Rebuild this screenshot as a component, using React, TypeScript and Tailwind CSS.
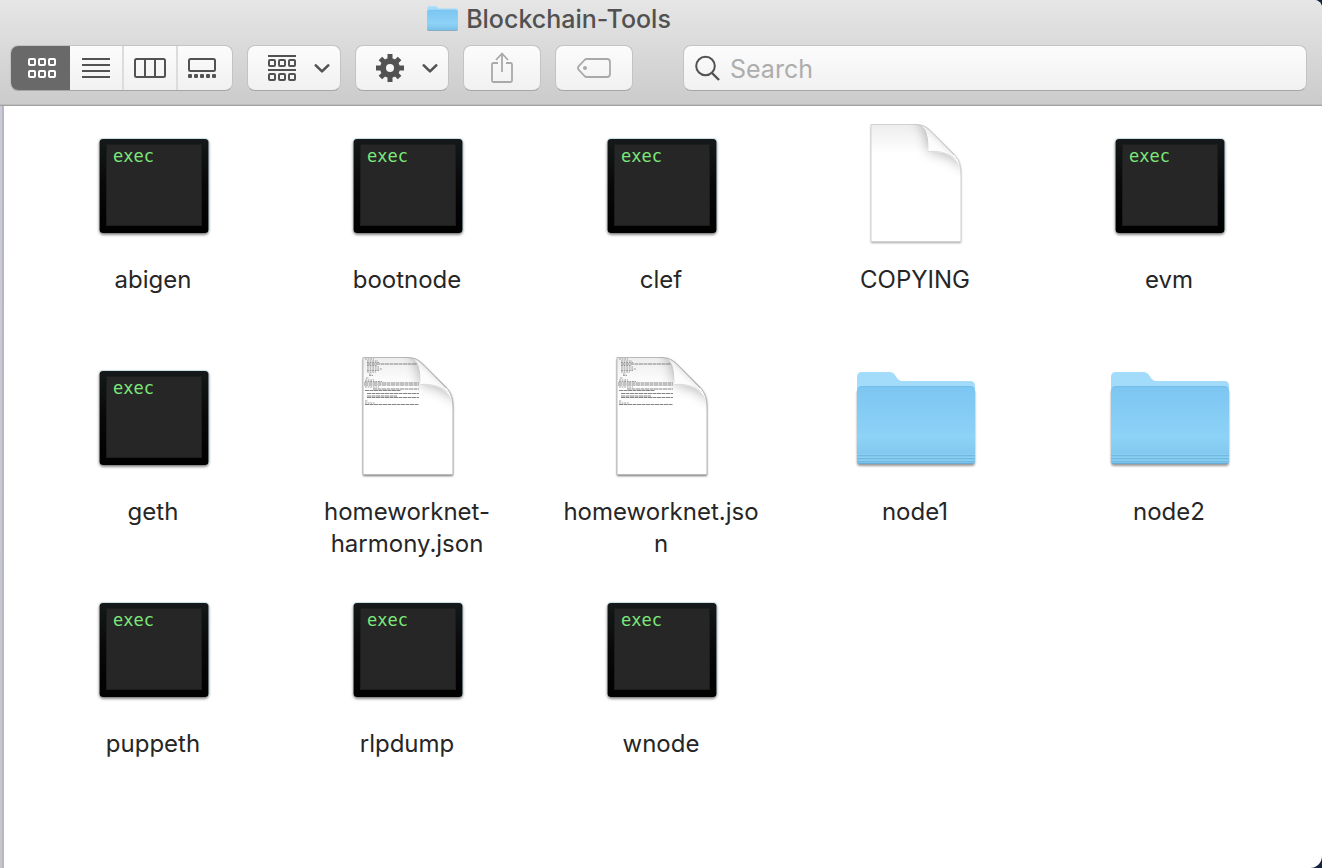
import { useId, useState } from "react";
import type { ReactNode } from "react";

type Kind = "exec" | "blank" | "json" | "folder";

const files: { name: string; kind: Kind }[] = [
  { name: "abigen", kind: "exec" },
  { name: "bootnode", kind: "exec" },
  { name: "clef", kind: "exec" },
  { name: "COPYING", kind: "blank" },
  { name: "evm", kind: "exec" },
  { name: "geth", kind: "exec" },
  { name: "homeworknet-harmony.json", kind: "json" },
  { name: "homeworknet.json", kind: "json" },
  { name: "node1", kind: "folder" },
  { name: "node2", kind: "folder" },
  { name: "puppeth", kind: "exec" },
  { name: "rlpdump", kind: "exec" },
  { name: "wnode", kind: "exec" },
];

function ExecIcon() {
  const id = useId();
  return (
    <svg viewBox="0 0 128 128" className="size-32" aria-hidden="true">
      <defs>
        <linearGradient id={id} x1="0" y1="0" x2="0" y2="1">
          <stop offset="0" stopColor="#15191a" />
          <stop offset="0.5" stopColor="#070808" />
          <stop offset="1" stopColor="#000" />
        </linearGradient>
        <filter id={id + "s"} x="-10%" y="-10%" width="120%" height="120%">
          <feGaussianBlur stdDeviation="1.4" />
        </filter>
      </defs>
      <rect x="10.500" y="21" width="109" height="94.500" rx="4" fill="#000" opacity="0.6" filter={`url(#${id}s)`} />
      <rect x="10" y="19" width="110" height="95" rx="4" fill="#cfe0e8" />
      <rect x="10.500" y="20" width="109" height="94" rx="3.500" fill={`url(#${id})`} />
      <rect x="17.500" y="25.500" width="95" height="81" fill="#262626" stroke="#1c1c1c" />
      <text x="24" y="43" fill="#7be87b" fontSize="17" fontFamily="'DejaVu Sans Mono', monospace">
        exec
      </text>
    </svg>
  );
}

const textRows: [number, number, number][] = [
  [2, 2, 9], [4, 4, 11], [5.500, 4, 12], [7, 4, 50], [8.500, 4, 10], [10, 4, 12], [12, 4, 15],
  [13.500, 4, 12], [15, 4, 9], [17, 6, 3], [18.500, 6, 4], [21, 3, 3], [23, 2, 9], [24.500, 2, 17], [26, 1, 55],
  [28, 1, 55], [30, 2, 14], [32, 10, 46], [33.500, 2, 36], [36.500, 4, 52], [39, 4, 30], [40.500, 4, 52],
  [44, 2, 3], [46, 2, 10], [47.500, 2, 54],
];

function DocIcon({ text = false }: { text?: boolean }) {
  const id = useId();
  return (
    <svg viewBox={text ? "0 -1 128 128" : "0 0 128 128"} className="size-32" aria-hidden="true">
      <defs>
        <linearGradient id={id + "c"} gradientUnits="userSpaceOnUse" x1="78" y1="33" x2="90" y2="20">
          <stop offset="0" stopColor="#fff" />
          <stop offset="0.6" stopColor="#fbfbfb" />
          <stop offset="1" stopColor="#e6e6e6" />
        </linearGradient>
        <linearGradient id={id + "t"} x1="0" y1="0" x2="0" y2="1">
          <stop offset="0" stopColor="#000" stopOpacity="0.07" />
          <stop offset="1" stopColor="#000" stopOpacity="0" />
        </linearGradient>
        <filter id={id + "b"} x="-60%" y="-60%" width="220%" height="220%">
          <feGaussianBlur stdDeviation="7" />
        </filter>
        <filter id={id + "s"} x="-10%" y="-10%" width="120%" height="120%">
          <feGaussianBlur stdDeviation="1" />
        </filter>
        <clipPath id={id + "p"}>
          <path d="M20 5H64C74 5 78 14 78 32.500C94 32.500 110 38 110 56V123H20Z" />
        </clipPath>
      </defs>
      <path d="M20 7H66C74 7 77 10 81 14L103 36C109 42 110 48 110 56V124H20Z" fill="#000" opacity={text ? 0.55 : 0.35} filter={`url(#${id}s)`} />
      <path
        d="M20 5.500H64C72 5.500 77 9 81 13L103 35C108 41 110 47 110 56V122.500H20Z"
        fill="#fff"
        stroke={text ? "#b9b9b9" : "#d2d2d2"}
        strokeWidth="1"
      />
      <g clipPath={`url(#${id}p)`}>
        <path d="M20.500 6H80V34H20.500Z" fill={`url(#${id}t)`} />
        <path d="M66 -4C76 8 78 18 78 32C92 32 106 38 118 52L122 -8Z" fill="#000" opacity="0.34" filter={`url(#${id}b)`} />
      </g>
      {text &&
        textRows.map(([y, x, w], i) => (
          <path
            key={i}
            d={`M${20 + x} ${5 + y}H${Math.min(20 + x + w, 76)}`}
            stroke={w > 28 ? "#777" : "#999"}
            strokeWidth={w > 28 ? 0.9 : 1}
            strokeDasharray={w > 28 ? "4 .5" : "1.800 .8"}
          />
        ))}
      <path d="M70 6.500C76 9 78 18 77.500 32.500C88 31.500 97 34 104 38L81 13.500Q76 8 70 6.500Z" fill={`url(#${id}c)`} />
      <path d="M77.500 32.500C88 31.500 97 34 105 40" fill="none" stroke="#000" strokeOpacity="0.12" strokeWidth="1" />
      <path d="M70 6C76 8 79 12 81 13.500L103 36" fill="none" stroke={text ? "#bababa" : "#cccccc"} strokeWidth="1" />
    </svg>
  );
}

function FolderIcon({ className = "size-32", viewBox = "0 0 128 128" }: { className?: string; viewBox?: string }) {
  const id = useId();
  return (
    <svg viewBox={viewBox} className={className} preserveAspectRatio="none" aria-hidden="true">
      <defs>
        <linearGradient id={id} x1="0" y1="0" x2="0" y2="1">
          <stop offset="0" stopColor="#7cc6f2" />
          <stop offset="0.65" stopColor="#8dd2f7" />
          <stop offset="0.85" stopColor="#84caf0" />
          <stop offset="1" stopColor="#7dc4ec" />
        </linearGradient>
        <filter id={id + "s"} x="-10%" y="-10%" width="120%" height="120%">
          <feGaussianBlur stdDeviation="1" />
        </filter>
      </defs>
      <path d="M6 40H124V112Q124 115 121 115H9Q6 115 6 112Z" fill="#000" opacity="0.4" filter={`url(#${id}s)`} />
      <path d="M6 26Q6 21 11 21H39C45 21 45 30 51 30H119Q124 30 124 35V109Q124 113 120 113H10Q6 113 6 109Z" fill="#a3dbfa" />
      <path d="M6 40Q6 35.500 10 35.500H120Q124 35.500 124 40V110Q124 113 121 113H9Q6 113 6 110Z" fill={`url(#${id})`} />
      <path d="M7 37.500Q8 35.500 11 35.500H119Q122 35.500 123 37.500" fill="none" stroke="#76bfea" strokeWidth="1" />
      <path d="M6 104.500H124M6 107.500H124M6 110.500H124" stroke="#6fb8e0" strokeWidth="1" />
      <path d="M6 103.500H124M6 106.500H124M6 109.500H124" stroke="#8ccff3" strokeWidth="1" />
      <path d="M7 112.500H123" stroke="#66add6" strokeWidth="1" />
    </svg>
  );
}

function FileIcon({ kind }: { kind: Kind }) {
  if (kind === "exec") return <ExecIcon />;
  if (kind === "folder") return <FolderIcon />;
  return <DocIcon text={kind === "json"} />;
}

function Squares({ y }: { y: number }) {
  return (
    <>
      <rect x="1" y={y} width="6" height="6" rx="1" />
      <rect x="11" y={y} width="6" height="6" rx="1" />
      <rect x="21" y={y} width="6" height="6" rx="1" />
    </>
  );
}

const stroke = { fill: "none", stroke: "currentColor", strokeWidth: 2 } as const;

const views: { label: string; size: string; icon: ReactNode }[] = [
  {
    label: "Icons",
    size: "w-[59px] pl-1",
    icon: (
      <svg width="28" height="20" {...stroke}>
        <Squares y={1} />
        <Squares y={13} />
      </svg>
    ),
  },
  {
    label: "List",
    size: "w-[54px]",
    icon: (
      <svg width="28" height="20" {...stroke}>
        <path d="M0 1H28M0 7H28M0 13H28M0 19H28" />
      </svg>
    ),
  },
  {
    label: "Columns",
    size: "w-[54px]",
    icon: (
      <svg width="32" height="20" {...stroke}>
        <rect x="1" y="1" width="30" height="18" rx="1.500" />
        <path d="M11 1V19M21 1V19" />
      </svg>
    ),
  },
  {
    label: "Gallery",
    size: "w-[54px] pr-1.5",
    icon: (
      <svg width="28" height="20" {...stroke}>
        <rect x="1" y="1" width="26" height="12" rx="1.500" />
        <g fill="currentColor" stroke="none">
          <rect x="0" y="16" width="4" height="4" rx="1" />
          <rect x="6" y="16" width="4" height="4" rx="1" />
          <rect x="12" y="16" width="4" height="4" rx="1" />
          <rect x="18" y="16" width="4" height="4" rx="1" />
          <rect x="24" y="16" width="4" height="4" rx="1" />
        </g>
      </svg>
    ),
  },
];

function Chevron() {
  return (
    <svg width="16" height="10" fill="none" stroke="currentColor" strokeWidth="2.600" strokeLinecap="round" strokeLinejoin="round">
      <path d="M1.800 2.400L8 8.400L14.200 2.400" />
    </svg>
  );
}

const face =
  "flex h-[46px] shrink-0 items-center rounded-lg border border-[#c3c3c3] border-b-[#a6a6a6] bg-linear-to-b from-[#fcfcfc] to-[#f1f1f1] text-[#525252]";

export default function App() {
  const [view, setView] = useState("Icons");
  return (
    <div className="min-h-screen bg-[#14233f] font-[Inter,sans-serif]">
      <div className="flex min-h-screen flex-col overflow-hidden rounded-tr-lg rounded-br-[12px] bg-white">
        <header className="border-b border-[#a3a3a3] bg-linear-to-b from-[#e6e6e6] to-[#cbcbcb] pr-[15px] pb-[14px] pl-[10px] shadow-[inset_0_-1px_0_#bcbcbc]">
          <div className="flex h-[45px] items-start justify-center gap-2 pr-[219px]">
            <FolderIcon className="mt-[6px] h-[25px] w-[31px]" viewBox="4 20 122 96" />
            <h1 className="pt-[3px] text-[25px] leading-8 font-medium text-[#515151]">Blockchain-Tools</h1>
          </div>
          <div className="flex items-center gap-[14px]">
            <div role="group" aria-label="View" className={`${face} overflow-hidden`}>
              {views.map((v) => (
                <button
                  key={v.label}
                  type="button"
                  aria-label={v.label}
                  aria-pressed={view === v.label}
                  onClick={() => setView(v.label)}
                  className={`${v.size} flex h-[46px] items-center justify-center border-[#dcdcdc] not-last:border-r-2 aria-pressed:border-[#696969] aria-pressed:bg-[#696969] aria-pressed:text-white`}
                >
                  {v.icon}
                </button>
              ))}
            </div>
            <button type="button" aria-label="Group items" className={`${face} w-[94px] justify-between pr-[10px] pl-5`}>
              <svg width="28" height="26" {...stroke}>
                <path d="M0 1H28M0 15H28" />
                <Squares y={5} />
                <Squares y={19} />
              </svg>
              <Chevron />
            </button>
            <button type="button" aria-label="Actions" className={`${face} w-[94px] justify-between pr-[10px] pl-5`}>
              <svg width="28" height="28" viewBox="-14 -14 28 28" fill="none" stroke="currentColor">
                <circle r="7" strokeWidth="6" />
                <path
                  strokeWidth="5"
                  d="M0 -14V-8M0 14V8M-14 0H-8M14 0H8M-9.600 -9.600L-6 -6M9.600 9.600L6 6M-9.600 9.600L-6 6M9.600 -9.600L6 -6"
                />
              </svg>
              <Chevron />
            </button>
            <button type="button" aria-label="Share" className={`${face} w-[78px] justify-center text-[#a9a9a9]`}>
              <svg width="22" height="32" fill="none" stroke="currentColor" strokeWidth="1.800">
                <path d="M7 11H2.500Q1 11 1 12.500V28.500Q1 30 2.500 30H19.500Q21 30 21 28.500V12.500Q21 11 19.500 11H15" />
                <path d="M11 20V2M5 8L11 1.500L17 8" />
              </svg>
            </button>
            <button type="button" aria-label="Edit tags" className={`${face} w-[78px] justify-center text-[#a9a9a9]`}>
              <svg width="34" height="20" fill="none" stroke="currentColor" strokeWidth="1.800">
                <path d="M10 1H30Q33 1 33 4V16Q33 19 30 19H10Q8.500 19 7.500 18L1.600 11.600Q0.400 10 1.600 8.400L7.500 2Q8.500 1 10 1Z" />
                <circle cx="8" cy="10" r="2" fill="currentColor" stroke="none" />
              </svg>
            </button>
            <label className={`${face} ml-9 min-w-0 shrink grow gap-[10px] pr-3 pl-[11px]`}>
              <svg width="25" height="26" fill="none" stroke="currentColor" strokeWidth="2" className="shrink-0" aria-hidden="true">
                <circle cx="10.500" cy="11" r="9.300" />
                <path d="M17 18L24 25" strokeWidth="2.400" />
              </svg>
              <input
                type="search"
                aria-label="Search"
                placeholder="Search"
                className="h-9 min-w-0 grow bg-transparent pt-1 text-[25px] outline-none placeholder:text-[#adadad]"
              />
            </label>
          </div>
        </header>
        <div className="flex grow">
          <div className="w-1 border-r-2 border-[#b6b7c0] bg-linear-to-b from-[#cacbda] to-[#c4c6c8]" />
          <main className="grow pt-[13px] pr-[26px] pb-12 pl-[22px]">
            <ul className="grid auto-rows-[232px] grid-cols-5">
              {files.map((f) => (
                <li key={f.name} className="flex flex-col items-center">
                  <FileIcon kind={f.kind} />
                  <span className="mt-[17px] w-[200px] text-center text-2xl leading-8 wrap-break-word text-[#262626]">
                    {f.name}
                  </span>
                </li>
              ))}
            </ul>
          </main>
        </div>
      </div>
    </div>
  );
}
